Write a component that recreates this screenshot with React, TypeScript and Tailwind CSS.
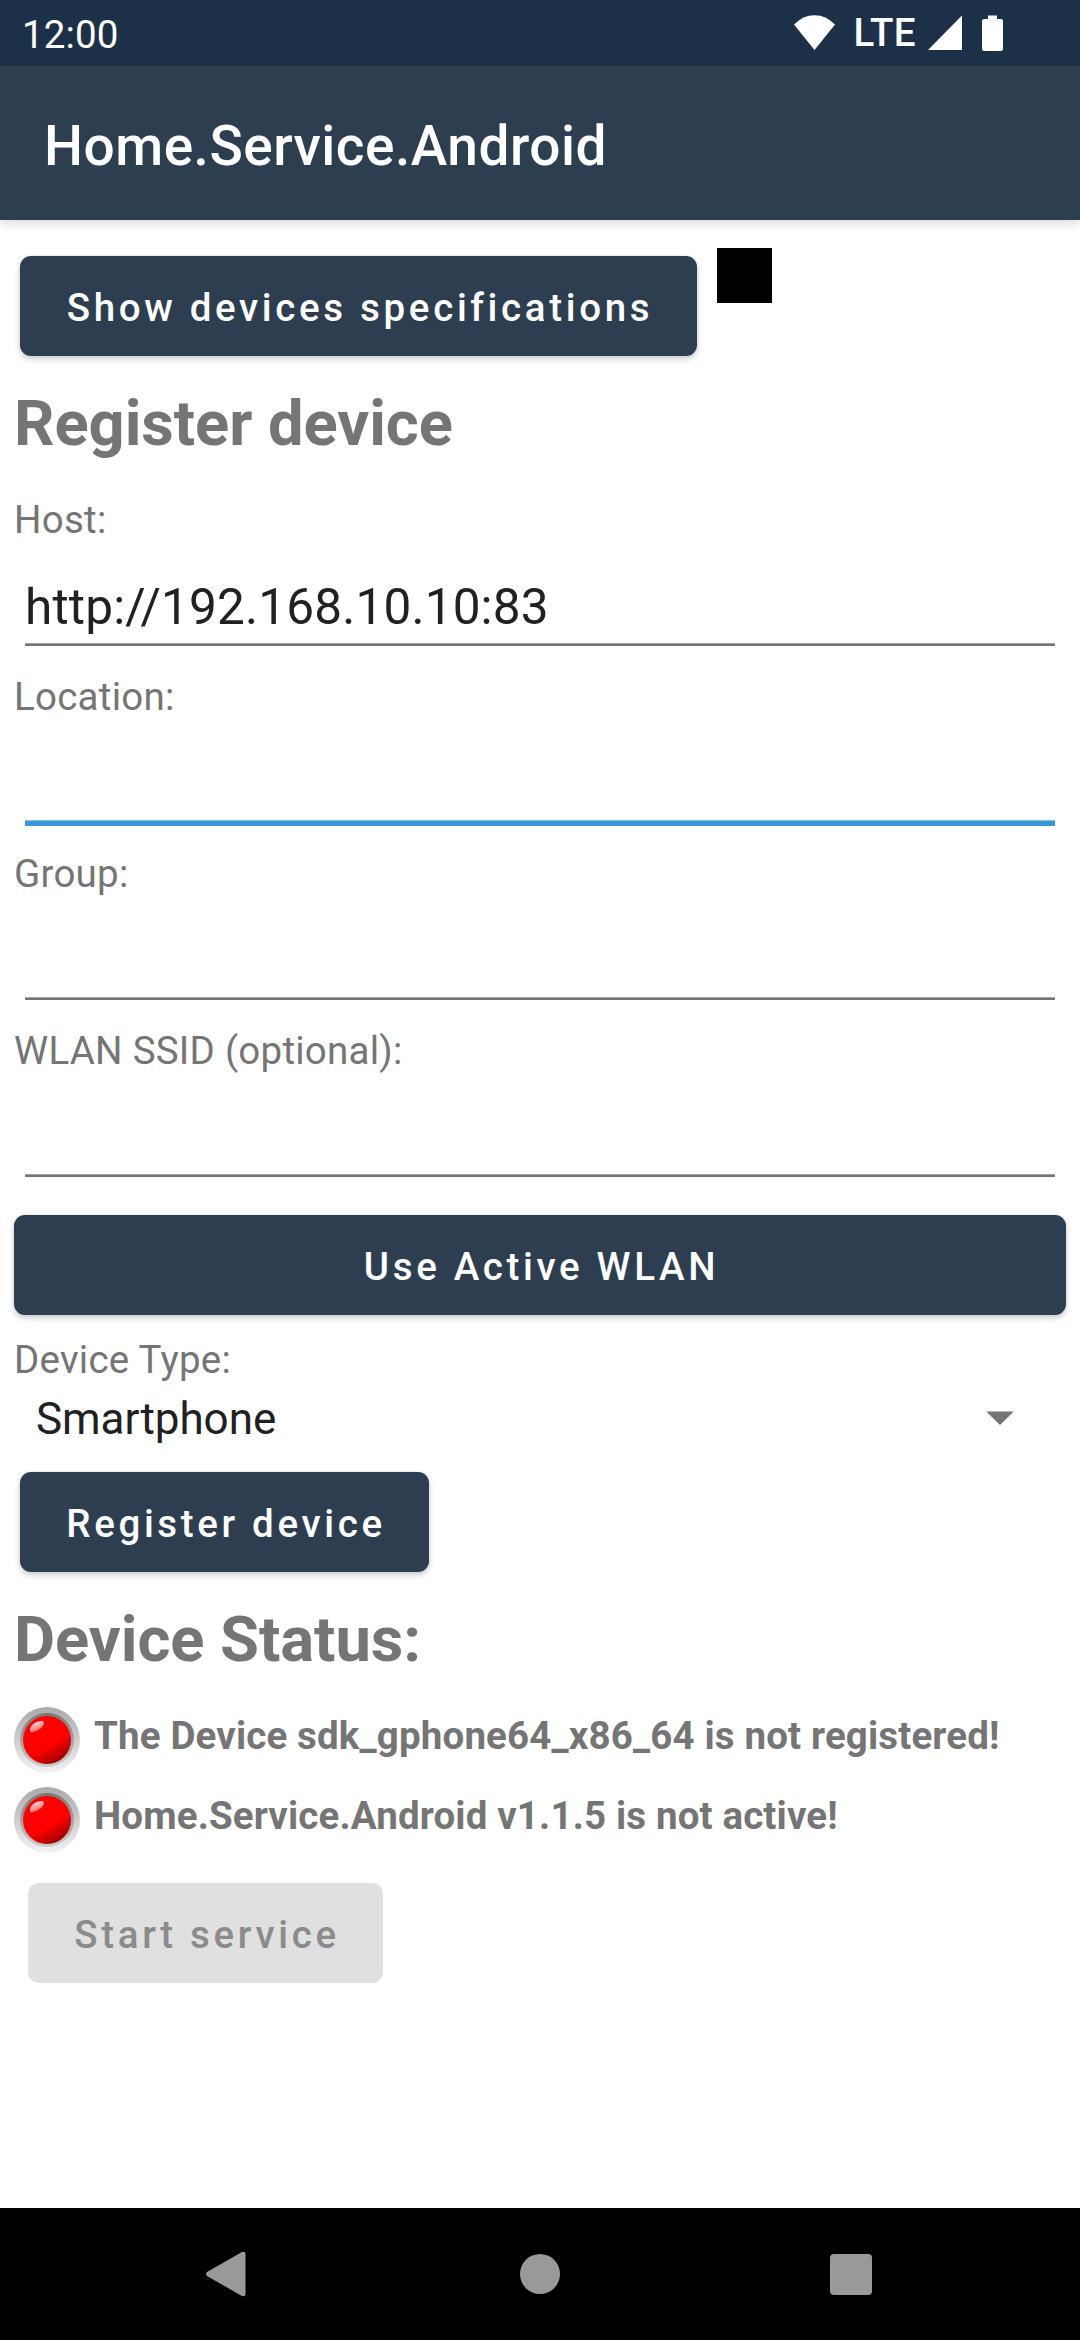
import React from "react";

function StatusBar() {
  return (
    <div className="flex h-[66px] shrink-0 items-start justify-between bg-[#1c3147] pr-[77px] pl-[22px] text-[38.5px] leading-[45px] text-white">
      <span className="mt-3 tracking-[0.15px]">12:00</span>
      <div className="flex items-start">
        <svg className="mt-[15px] block h-[35px] w-[41px]" viewBox="0 0 41 35" fill="#fff">
          <path d="M0 9.5Q9 0.2 20.5 0.2T41 9.5L20.5 35Z" />
        </svg>
        <span className="mt-[10px] ml-[18.5px] w-[74.5px] font-medium tracking-[0.4px]">LTE</span>
        <svg className="mt-[15px] block h-[35px] w-[34px]" viewBox="0 0 34 35" fill="#fff">
          <path d="M34 0.5V35H0Z" />
        </svg>
        <svg className="mt-[15px] ml-5 block h-9 w-[21px]" viewBox="0 0 21 36" fill="#fff">
          <path d="M6 0.4H15V4H19A2 2 0 0 1 21 6V34A2 2 0 0 1 19 36H2A2 2 0 0 1 0 34V6A2 2 0 0 1 2 4H6Z" />
        </svg>
      </div>
    </div>
  );
}

type ButtonProps = { children: React.ReactNode; className?: string; disabled?: boolean };

function Button({ children, className = "", disabled = false }: ButtonProps) {
  const tone = disabled
    ? "bg-[#e0e0e0] text-[#8b8b8b]"
    : "bg-[#2d3e50] text-white shadow-[0_3px_6px_rgba(0,0,0,0.2),0_0_3px_rgba(0,0,0,0.08)]";
  return (
    <button
      disabled={disabled}
      className={`flex h-[100px] shrink-0 items-center justify-center rounded-[11px] pt-[3px] pr-10 pl-[43px] text-[38.5px] leading-[45px] font-medium tracking-[3.66px] whitespace-nowrap ${tone} ${className}`}
    >
      {children}
    </button>
  );
}

function Label({ children }: { children: React.ReactNode }) {
  return (
    <div className="h-[45px] text-[38.5px] leading-[45px] tracking-[0.25px] whitespace-nowrap text-[#757575]">
      {children}
    </div>
  );
}

function Heading({ children, className = "" }: { children: React.ReactNode; className?: string }) {
  return (
    <h2
      className={`h-[74px] text-[63.25px] leading-[74px] font-bold tracking-[-0.06px] whitespace-nowrap text-[#757575] ${className}`}
    >
      {children}
    </h2>
  );
}

function Field({ label, value = "", focused = false }: { label: string; value?: string; focused?: boolean }) {
  return (
    <div className="h-[177px]">
      <Label>{label}</Label>
      <div className="mx-[11px] mt-9 h-[58px] text-[49.5px] leading-[58px] tracking-[0.17px] whitespace-nowrap text-[#212121]">
        {value}
      </div>
      <div
        className={
          focused
            ? "mx-[11px] mt-[7px] h-[6px] border-t border-[#85c1e9] bg-[#3498db]"
            : "mx-[11px] mt-[7px] h-[3px] border-t border-[#a3a3a3] bg-[#757575]"
        }
      />
    </div>
  );
}

function Led({ id }: { id: string }) {
  return (
    <svg className="block h-[66px] w-[66px] shrink-0" viewBox="0 0 66 66">
      <defs>
        <linearGradient id={`${id}-rim`} x1="0" y1="0" x2="0" y2="1">
          <stop offset="0" stopColor="#a9a9a9" />
          <stop offset="1" stopColor="#f2f2f2" />
        </linearGradient>
        <linearGradient id={`${id}-bezel`} x1="0" y1="0" x2="0" y2="1">
          <stop offset="0" stopColor="#777" />
          <stop offset="1" stopColor="#cdcdcd" />
        </linearGradient>
        <linearGradient id={`${id}-lamp`} x1="0.3" y1="0.1" x2="0.78" y2="0.92">
          <stop offset="0.6" stopColor="#f00" />
          <stop offset="1" stopColor="#a00000" />
        </linearGradient>
        <linearGradient id={`${id}-shine`} x1="0.2" y1="0" x2="0.7" y2="1">
          <stop offset="0" stopColor="#fff" />
          <stop offset="1" stopColor="#f44" />
        </linearGradient>
      </defs>
      <circle cx="33" cy="33" r="33" fill={`url(#${id}-rim)`} />
      <circle cx="33" cy="33" r="27" fill={`url(#${id}-bezel)`} />
      <circle cx="33" cy="33" r="24" fill={`url(#${id}-lamp)`} />
      <path d="M16 25C15 18 22 14 28 14C32 15 29 20 26 22C23 24 18 26 16 25Z" fill={`url(#${id}-shine)`} />
    </svg>
  );
}

function StatusRow({ id, children }: { id: string; children: React.ReactNode }) {
  return (
    <div className="flex h-[66px] items-start gap-[14px]">
      <Led id={id} />
      <span className="mt-[6px] text-[38.5px] leading-[45px] font-bold tracking-[0.15px] whitespace-nowrap text-[#757575]">
        {children}
      </span>
    </div>
  );
}

export default function App() {
  return (
    <div className="flex h-[2340px] w-[1080px] flex-col overflow-hidden bg-white font-[Roboto,sans-serif]">
      <StatusBar />
      <header className="relative flex h-[154px] shrink-0 items-center bg-[#2d3e50] pt-[6px] pl-11 text-[55px] leading-[64px] font-medium tracking-[0.5px] text-white shadow-[0_4px_10px_rgba(0,0,0,0.14)]">
        Home.Service.Android
      </header>

      <main className="flex flex-1 flex-col px-[14px]">
        <div className="flex h-[166px] shrink-0 items-start">
          <Button className="mt-9 ml-[6px] w-[677px]">Show devices specifications</Button>
          <div className="mt-7 ml-5 h-[55px] w-[55px] bg-black" />
        </div>
        <Heading className="mb-[37px]">Register device</Heading>

        <Field label="Host:" value="http://192.168.10.10:83" />
        <Field label="Location:" focused />
        <Field label="Group:" />
        <Field label="WLAN SSID (optional):" />

        <Button className="mt-[10px] mb-[22px]">Use Active WLAN</Button>

        <Label>Device Type:</Label>
        <div className="mt-[11px] flex h-[52px] items-start justify-between pr-[52px] pl-[22px] text-[44px] leading-[52px] tracking-[-0.05px] text-[#212121]">
          <span>Smartphone</span>
          <svg className="mt-[18px] block h-[14px] w-7" viewBox="0 0 28 14" fill="#757575">
            <path d="M0.2 0.4H27.8L14 14Z" />
          </svg>
        </div>
        <Button className="mt-[27px] ml-[6px] w-[409px]">Register device</Button>

        <Heading className="mt-[30px] mb-[31px]">Device Status:</Heading>
        <div className="flex flex-col gap-[14px]">
          <StatusRow id="registration">The Device sdk_gphone64_x86_64 is not registered!</StatusRow>
          <StatusRow id="service">Home.Service.Android v1.1.5 is not active!</StatusRow>
        </div>
        <Button className="mt-[30px] ml-[14px] w-[355px]" disabled>
          Start service
        </Button>
      </main>

      <nav className="flex h-[132px] shrink-0 items-center justify-between bg-black pr-[208px] pl-[206px]">
        <svg className="block h-[46px] w-10" viewBox="0 0 40 46" fill="#999">
          <path d="M1 21L35.5 1.2Q39.5 -0.5 39.5 3V43Q39.5 46.5 35.5 44.8L1 25Q-0.8 23 1 21Z" />
        </svg>
        <div className="ml-[3px] h-10 w-10 rounded-full bg-[#999]" />
        <div className="h-[41px] w-[42px] rounded-[4px] bg-[#999]" />
      </nav>
    </div>
  );
}
